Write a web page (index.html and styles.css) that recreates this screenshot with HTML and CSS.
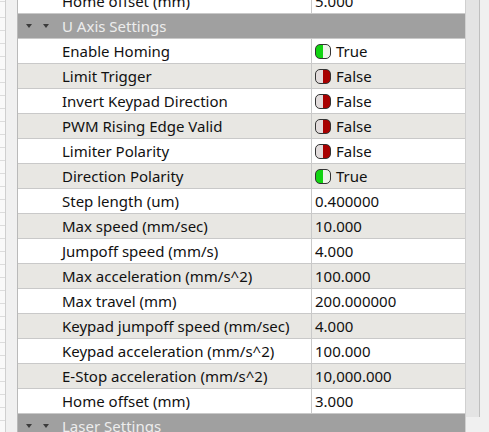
FILE: index.html
```html
<!DOCTYPE html>
<html lang="en">
<head>
    <meta charset="UTF-8">
    <title>Axis Settings</title>
    <link rel="stylesheet" href="styles.css">
</head>
<body>
    <div class="window">
        <div class="canvas-edge"></div>
        <div class="gutter"></div>
        <div class="grid-wrap">
            <div class="property-list">
                <div class="row">
                    <div class="name">Home offset (mm)</div>
                    <div class="value">5.000</div>
                </div>
                <div class="row group">
                    <span class="arrow"></span><span class="arrow"></span>
                    <span class="group-title">U Axis Settings</span>
                </div>
                <div class="row">
                    <div class="name">Enable Homing</div>
                    <div class="value"><span class="toggle on"></span>True</div>
                </div>
                <div class="row alt">
                    <div class="name">Limit Trigger</div>
                    <div class="value"><span class="toggle off"></span>False</div>
                </div>
                <div class="row">
                    <div class="name">Invert Keypad Direction</div>
                    <div class="value"><span class="toggle off"></span>False</div>
                </div>
                <div class="row alt">
                    <div class="name">PWM Rising Edge Valid</div>
                    <div class="value"><span class="toggle off"></span>False</div>
                </div>
                <div class="row">
                    <div class="name">Limiter Polarity</div>
                    <div class="value"><span class="toggle off"></span>False</div>
                </div>
                <div class="row alt">
                    <div class="name">Direction Polarity</div>
                    <div class="value"><span class="toggle on"></span>True</div>
                </div>
                <div class="row">
                    <div class="name">Step length (um)</div>
                    <div class="value">0.400000</div>
                </div>
                <div class="row alt">
                    <div class="name">Max speed (mm/sec)</div>
                    <div class="value">10.000</div>
                </div>
                <div class="row">
                    <div class="name">Jumpoff speed (mm/s)</div>
                    <div class="value">4.000</div>
                </div>
                <div class="row alt">
                    <div class="name">Max acceleration (mm/s^2)</div>
                    <div class="value">100.000</div>
                </div>
                <div class="row">
                    <div class="name">Max travel (mm)</div>
                    <div class="value">200.000000</div>
                </div>
                <div class="row alt">
                    <div class="name">Keypad jumpoff speed (mm/sec)</div>
                    <div class="value">4.000</div>
                </div>
                <div class="row">
                    <div class="name">Keypad acceleration (mm/s^2)</div>
                    <div class="value">100.000</div>
                </div>
                <div class="row alt">
                    <div class="name">E-Stop acceleration (mm/s^2)</div>
                    <div class="value">10,000.000</div>
                </div>
                <div class="row">
                    <div class="name">Home offset (mm)</div>
                    <div class="value">3.000</div>
                </div>
                <div class="row group">
                    <span class="arrow"></span><span class="arrow"></span>
                    <span class="group-title">Laser Settings</span>
                </div>
            </div>
        </div>
        <div class="scrollbar"></div>
        <div class="side"></div>
    </div>
</body>
</html>
```

FILE: styles.css
```css
body {
    margin: 0;
    font-family: "Noto Sans", "Open Sans", sans-serif;
    font-size: 15px;
    color: #111;
    background-color: #f0f0f0;
}
.window {
    display: flex;
    height: 432px;
    overflow: hidden;
}
.canvas-edge {
    width: 5px;
    border-right: 1px solid #cfcfcf;
    background-color: #f9f9f9;
    background-image: repeating-linear-gradient(to bottom, transparent 0, transparent 12px, #dcdcdc 12px, #dcdcdc 13px);
    background-position: 0 5px;
}
.gutter {
    width: 11px;
    background-color: #f0f0f0;
    border-right: 1px solid #b9b9b9;
}
.grid-wrap {
    width: 447px;
    border-right: 1px solid #d0d0d0;
    background-color: white;
    overflow: hidden;
}
.property-list {
    margin-top: -11px;
}
.row {
    display: flex;
    align-items: center;
    height: 24px;
    border-bottom: 1px solid #c9c9c9;
    background-color: white;
}
.row.alt {
    background-color: #e8e7e3;
}
.name {
    width: 249px;
    padding-left: 44px;
    height: 100%;
    display: flex;
    align-items: center;
    border-right: 1px solid #c9c9c9;
    white-space: nowrap;
}
.value {
    flex: 1;
    padding-left: 3px;
    display: flex;
    align-items: center;
    white-space: nowrap;
}
.row.group {
    background-color: #a0a0a0;
    color: #ededed;
}
.arrow {
    width: 0;
    height: 0;
    border-left: 3.5px solid transparent;
    border-right: 3.5px solid transparent;
    border-top: 4px solid #3c3c3c;
    margin-left: 8px;
    margin-right: 3px;
}
.group-title {
    margin-left: 10px;
}
.toggle {
    width: 14px;
    height: 13px;
    border: 1px solid #333;
    border-radius: 5px;
    margin-right: 5px;
    box-sizing: content-box;
    background-color: #e8e8e8;
}
.toggle.on {
    background: linear-gradient(to right, #12d412 0, #12d412 50%, #eef3ea 50%);
}
.toggle.off {
    background: linear-gradient(to right, #e2dcdc 0, #e2dcdc 50%, #a80000 50%);
}
.scrollbar {
    width: 13px;
    height: 417px;
    background-color: #e4e4e4;
    border-right: 1px solid #bfbfbf;
}
.side {
    flex: 1;
    background-color: #f0f0f0;
}
```
